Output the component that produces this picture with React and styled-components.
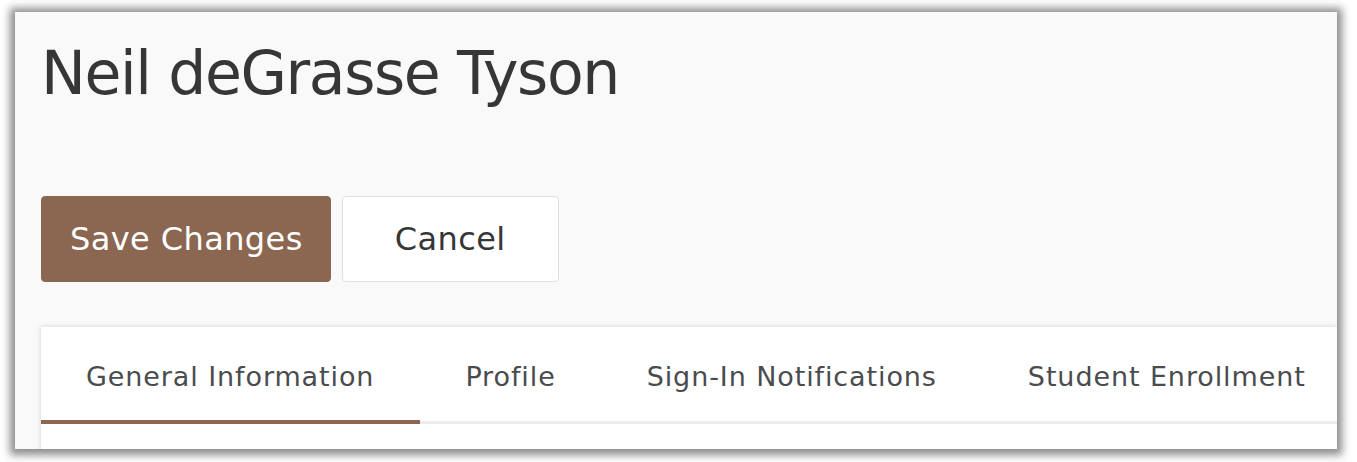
import React from 'react'
import styled, { createGlobalStyle } from 'styled-components'

const GlobalStyle = createGlobalStyle`
  html, body {
    margin: 0;
    padding: 0;
    background: #ffffff;
  }
  body {
    font-family: "DejaVu Sans", Verdana, sans-serif;
  }
`;

const Frame = styled.div`
  margin: 12px 20px 13px 15px;
  height: 437px;
  background: #f9f9f9;
  overflow: hidden;
  box-shadow: 0 1px 8px 5px rgba(0, 0, 0, 0.45);
  padding-left: 26px;
  box-sizing: border-box;
`;

const Title = styled.h1`
  margin: 0;
  padding-top: 25px;
  font-size: 60px;
  letter-spacing: -1.4px;
  font-weight: normal;
  line-height: 72px;
  color: #363636;
`;

const Actions = styled.div`
  display: flex;
  gap: 11px;
  margin-top: 87px;
`;

const Button = styled.button`
  height: 86px;
  padding: 0 ${p => (p.$primary ? '27px 0 28px' : '52px')};
  border-radius: 4px;
  font-family: "DejaVu Sans", Verdana, sans-serif;
  font-size: 32px;
  letter-spacing: 0.4px;
  border: 1px solid ${p => (p.$primary ? '#8b6651' : '#e0e0e0')};
  background: ${p => (p.$primary ? '#8b6651' : '#ffffff')};
  color: ${p => (p.$primary ? '#ffffff' : '#363636')};
`;

const Panel = styled.div`
  margin-top: 45px;
  background: #ffffff;
  box-shadow: 0 0 5px rgba(0, 0, 0, 0.16);
  height: 140px;
`;

const TabBar = styled.div`
  display: flex;
  border-bottom: 3px solid #ececec;
`;

const Tab = styled.div`
  position: relative;
  flex-shrink: 0;
  white-space: nowrap;
  height: 94px;
  display: flex;
  align-items: center;
  padding: 4px 46px 0 45px;
  box-sizing: border-box;
  font-size: 27px;
  letter-spacing: 0.9px;
  color: #494c4e;
  &::after {
    content: '';
    display: ${p => (p.$active ? 'block' : 'none')};
    position: absolute;
    left: 0;
    right: 0;
    bottom: -3px;
    height: 4px;
    background: #8b6651;
  }
`;

export default function App() {
  return (
    <>
      <GlobalStyle />
      <Frame>
        <Title>Neil deGrasse Tyson</Title>
        <Actions>
          <Button $primary>Save Changes</Button>
          <Button>Cancel</Button>
        </Actions>
        <Panel>
          <TabBar>
            <Tab $active>General Information</Tab>
            <Tab>Profile</Tab>
            <Tab>Sign-In Notifications</Tab>
            <Tab>Student Enrollment</Tab>
          </TabBar>
        </Panel>
      </Frame>
    </>
  )
}
